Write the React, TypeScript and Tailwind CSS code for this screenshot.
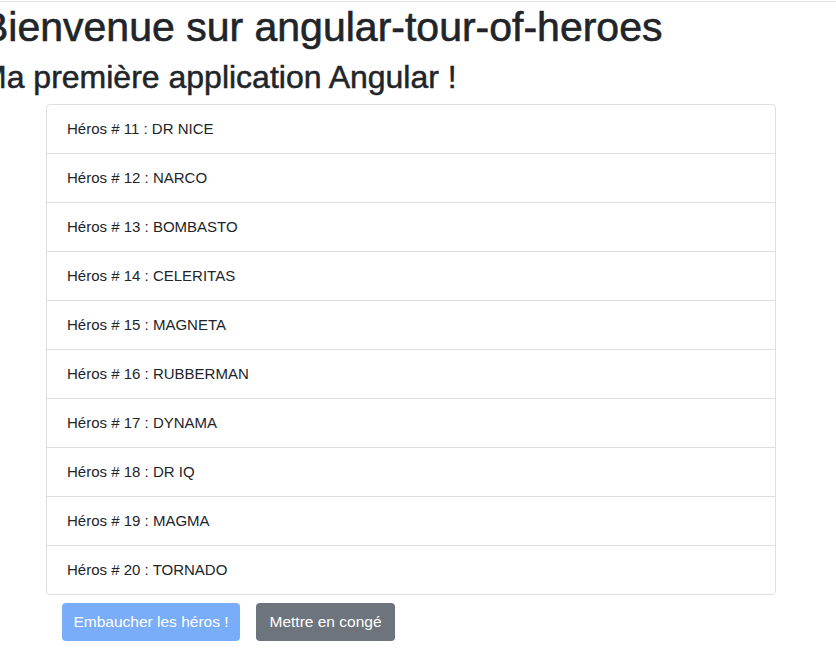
const heroes = [
  { id: 11, name: "DR NICE" },
  { id: 12, name: "NARCO" },
  { id: 13, name: "BOMBASTO" },
  { id: 14, name: "CELERITAS" },
  { id: 15, name: "MAGNETA" },
  { id: 16, name: "RUBBERMAN" },
  { id: 17, name: "DYNAMA" },
  { id: 18, name: "DR IQ" },
  { id: 19, name: "MAGMA" },
  { id: 20, name: "TORNADO" },
];

export default function App() {
  return (
    <div className="mt-px min-h-[671px] overflow-hidden border-t border-[#e3e3e3] bg-white font-['Liberation_Sans',Arial,sans-serif] text-[#212529]">
      <h1 className="-ml-[19px] mt-px whitespace-nowrap text-[41px] leading-[49px] [-webkit-text-stroke:0.6px_#212529]">
        Bienvenue sur angular-tour-of-heroes
      </h1>
      <h2 className="-ml-[20px] mt-[6px] whitespace-nowrap text-[32px] leading-[38px] [-webkit-text-stroke:0.5px_#212529]">
        Ma première application Angular !
      </h2>

      <ul className="ml-[46px] mt-2 w-[730px] divide-y divide-[#dfdfdf] rounded border border-[#dfdfdf]">
        {heroes.map((hero) => (
          <li key={hero.id} className="px-5 py-3 text-[15px] leading-6">
            Héros # {hero.id} : {hero.name}
          </li>
        ))}
      </ul>

      <div className="ml-[62px] mt-2 flex gap-4">
        <button
          disabled
          className="h-[38px] w-[178px] rounded bg-[#79adfa] text-[15.5px] text-white"
        >
          Embaucher les héros !
        </button>
        <button className="h-[38px] w-[139px] rounded bg-[#6d747c] text-[15.5px] text-white">
          Mettre en congé
        </button>
      </div>
    </div>
  );
}
